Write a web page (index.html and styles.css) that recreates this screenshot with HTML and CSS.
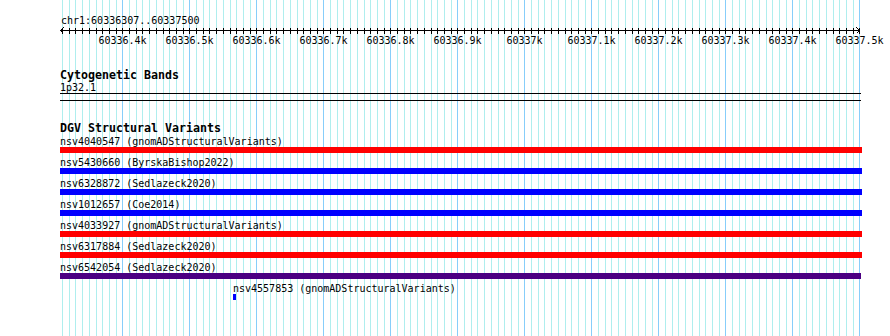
FILE: index.html
```html
<!DOCTYPE html>
<html lang="en">
<head>
  <meta charset="UTF-8">
  <title>chr1:60336307..60337500</title>
  <link rel="stylesheet" href="styles.css">
</head>
<body>
  <div class="panel">
    <svg id="grid" class="grid" width="890" height="336"></svg>

    <div class="ruler">
      <div class="chrom">chr1:60336307..60337500</div>
      <svg id="axis" class="axis" width="890" height="22"></svg>
    </div>

    <section class="track cyto">
      <h2 class="track-title">Cytogenetic Bands</h2>
      <div class="feature-label">1p32.1</div>
      <div class="band"></div>
    </section>

    <section class="track dgv">
      <h2 class="track-title">DGV Structural Variants</h2>
      <div class="variant">
        <div class="feature-label">nsv4040547 (gnomADStructuralVariants)</div>
        <div class="bar gain"></div>
      </div>
      <div class="variant">
        <div class="feature-label">nsv5430660 (ByrskaBishop2022)</div>
        <div class="bar loss"></div>
      </div>
      <div class="variant">
        <div class="feature-label">nsv6328872 (Sedlazeck2020)</div>
        <div class="bar loss"></div>
      </div>
      <div class="variant">
        <div class="feature-label">nsv1012657 (Coe2014)</div>
        <div class="bar loss"></div>
      </div>
      <div class="variant">
        <div class="feature-label">nsv4033927 (gnomADStructuralVariants)</div>
        <div class="bar gain"></div>
      </div>
      <div class="variant">
        <div class="feature-label">nsv6317884 (Sedlazeck2020)</div>
        <div class="bar gain"></div>
      </div>
      <div class="variant">
        <div class="feature-label">nsv6542054 (Sedlazeck2020)</div>
        <div class="bar both" style="width: 801px;"></div>
      </div>
      <div class="variant" style="margin-left: 173px;">
        <div class="feature-label">nsv4557853 (gnomADStructuralVariants)</div>
        <div class="bar loss" style="width: 3px;"></div>
      </div>
    </section>
  </div>

  <script src="ruler.js"></script>
</body>
</html>
```

FILE: styles.css
```css
body {
  margin: 0;
  background-color: #fff;
  color: #000;
  font-family: "DejaVu Sans Mono", "Liberation Mono", monospace;
  font-size: 10px;
}

.panel {
  position: relative;
  width: 890px;
  height: 336px;
  overflow: hidden;
}

.grid {
  position: absolute;
  left: 0;
  top: 0;
}

.grid line {
  stroke-width: 1;
  shape-rendering: crispEdges;
}

.grid .minor {
  stroke: #afeeee;
}

.grid .major {
  stroke: #87cefa;
}

.ruler,
.track {
  position: relative;
}

.ruler {
  height: 50px;
  padding-top: 15px;
  box-sizing: border-box;
}

.chrom {
  margin-left: 61px;
  line-height: 12px;
}

.axis {
  display: block;
}

.axis line,
.axis polyline {
  stroke: #000;
  stroke-width: 1;
  fill: none;
  shape-rendering: crispEdges;
}

.axis text {
  font-family: "DejaVu Sans Mono", "Liberation Mono", monospace;
  font-size: 10px;
  fill: #000;
  text-anchor: middle;
}

.track {
  padding-left: 60px;
}

.cyto {
  margin-top: 18px;
}

.dgv {
  margin-top: 20px;
}

.track-title {
  margin: 0;
  font-size: 11.63px;
  font-weight: bold;
  line-height: 14px;
}

.dgv .track-title {
  margin-bottom: 1px;
}

.feature-label {
  line-height: 11px;
  white-space: nowrap;
}

.band {
  width: 801px;
  height: 8px;
  box-sizing: border-box;
  border-top: 1px solid #000;
  border-bottom: 1px solid #000;
}

.variant {
  margin-bottom: 4px;
}

.bar {
  width: 802px;
  height: 6px;
}

.bar.gain {
  background-color: #ff0000;
}

.bar.loss {
  background-color: #0000ff;
}

.bar.both {
  background-color: #4b0082;
}
```

FILE: ruler.js
```js
// scale bar and grid for chr1:60336307..60337500
var START = 60336307;
var END = 60337500;
var LEFT = 60;
var WIDTH = 800;
var SCALE = WIDTH / (END - START + 1);
var SVG_NS = 'http://www.w3.org/2000/svg';

function toPx(bp) {
  return Math.round(LEFT + (bp - START) * SCALE) + 0.5;
}

function add(svg, tag, attrs, text) {
  var el = document.createElementNS(SVG_NS, tag);
  for (var k in attrs) el.setAttribute(k, attrs[k]);
  if (text) el.textContent = text;
  svg.appendChild(el);
  return el;
}

var grid = document.getElementById('grid');
var axis = document.getElementById('axis');

// axis line with arrow heads
add(axis, 'line', { x1: LEFT, x2: LEFT + WIDTH, y1: 3.5, y2: 3.5 });
add(axis, 'polyline', { points: (LEFT + 3.5) + ',0.5 ' + (LEFT + 0.5) + ',3.5 ' + (LEFT + 3.5) + ',6.5' });
add(axis, 'polyline', { points: (LEFT + WIDTH - 3.5) + ',0.5 ' + (LEFT + WIDTH - 0.5) + ',3.5 ' + (LEFT + WIDTH - 3.5) + ',6.5' });

for (var bp = Math.ceil(START / 10) * 10; bp <= END; bp += 10) {
  var x = toPx(bp);
  var major = bp % 100 === 0;
  add(grid, 'line', { x1: x, x2: x, y1: 0, y2: 336, 'class': major ? 'major' : 'minor' });
  add(axis, 'line', { x1: x, x2: x, y1: 1, y2: 7 });
  if (major) {
    add(axis, 'text', { x: x, y: 17 }, (bp / 1000) + 'k');
  }
}
```
